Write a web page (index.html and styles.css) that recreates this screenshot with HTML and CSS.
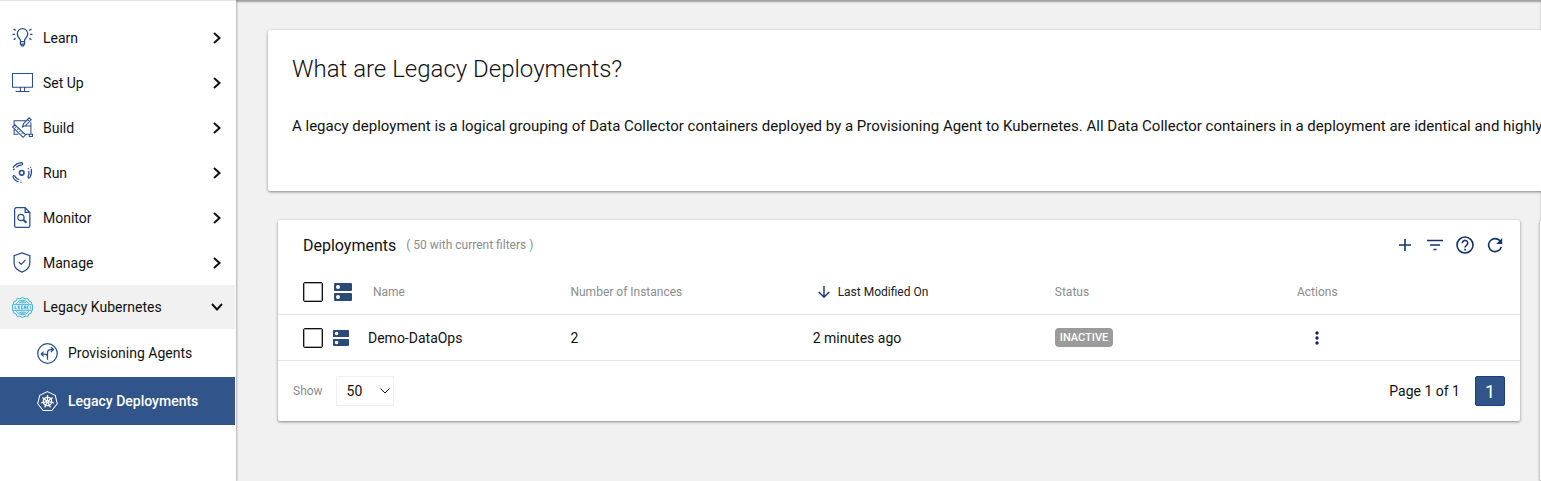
FILE: index.html
```html
<!DOCTYPE html>
<html lang="en">
<head>
  <meta charset="UTF-8" />
  <meta name="viewport" content="width=device-width, initial-scale=1.0"/>
  <title>Legacy Deployments</title>
  <link rel="stylesheet" href="styles.css">
</head>
<body>
  <svg class="sprite" aria-hidden="true">
    <symbol id="chevron" viewBox="0 0 12 14">
      <path d="M3 2l5.500 5L3 12" fill="none" stroke="currentColor" stroke-width="2"/>
    </symbol>
    <symbol id="server" viewBox="0 0 18 18">
      <path fill="currentColor" fill-rule="evenodd" d="M1 0h16a1 1 0 0 1 1 1v6a1 1 0 0 1-1 1H1a1 1 0 0 1-1-1V1a1 1 0 0 1 1-1zM4 2a2 2 0 1 0 0 4 2 2 0 0 0 0-4zM1 10h16a1 1 0 0 1 1 1v6a1 1 0 0 1-1 1H1a1 1 0 0 1-1-1v-6a1 1 0 0 1 1-1zM4 12a2 2 0 1 0 0 4 2 2 0 0 0 0-4z"/>
    </symbol>
  </svg>

  <div class="layout">
    <nav class="sidebar">
      <a class="nav-item" href="#">
        <svg class="nav-icon" viewBox="0 0 20 20">
          <path d="M8 14v-1.800C6.500 10.500 5 8.800 5 6.500a5 5 0 0 1 10 0c0 2.300-1.500 4-3 5.700V14zM8 14v2.200h4V14M8.500 16.500L9 18h2l.5-1.500M.5 7h2.500M17 7h2.500M1.500 2l2 1.200M18.500 2l-2 1.200M1.500 12l2-1.200M18.500 12l-2-1.200"/>
        </svg>
        <span class="nav-label">Learn</span>
        <svg class="chevron"><use href="#chevron"/></svg>
      </a>
      <a class="nav-item" href="#">
        <svg class="nav-icon thin" viewBox="0 0 20 20">
          <path d="M.5 1.500h19v13H.5zM8 14.500v3.500M12 14.500v3.500M3.500 18.500h13"/>
        </svg>
        <span class="nav-label">Set Up</span>
        <svg class="chevron"><use href="#chevron"/></svg>
      </a>
      <a class="nav-item" href="#">
        <svg class="nav-icon thin" viewBox="0 0 20 20">
          <path d="M13 3.500H2v4.500M2 12v4.500h4M18 5v12M13 16.500h3.500M10 8.500h8M16.500 16.500h3v2h-3zM.5 9.500L3 7.500l10 9.500-2.500 2.300zM3 10l1-.8M5 12l1-.8M7 14l1-.8M9 16l1-.8M10 9.500l1-3.200L16.300.8l2 1.900-5.500 5.500zM14.800 2.500l2 2"/>
        </svg>
        <span class="nav-label">Build</span>
        <svg class="chevron"><use href="#chevron"/></svg>
      </a>
      <a class="nav-item" href="#">
        <svg class="nav-icon" viewBox="0 0 20 20">
          <circle cx="9.300" cy="10.300" r="2.200" stroke-width="1.500"/>
          <path d="M.8 5.500A11 11 0 0 1 9 .6c1.500 0 1.500 2 .2 2.200A10 10 0 0 0 4 5M2.500 6.500L1 7.500M.7 13.500c.5 2 2.500 4.500 5.500 5.500M1 13.200c1.200-.8 1.800.3 2.300 1.200.9 1.400 2 2 3.700 2.500M8.500 17.500v.8M8.500 19.300v.7M16 8.500c.4 2 .2 3.500-.6 5-.6 1.500.8 2.400 1.700 1 1.500-2.500 1.800-5 1.200-8M15 6.300h1M17.600 5l.4.700"/>
        </svg>
        <span class="nav-label">Run</span>
        <svg class="chevron"><use href="#chevron"/></svg>
      </a>
      <a class="nav-item" href="#">
        <svg class="nav-icon" viewBox="0 0 20 20">
          <path d="M12.500.7H4a1.500 1.500 0 0 0-1.500 1.500v15.600A1.500 1.500 0 0 0 4 19.300h11.500a1.500 1.500 0 0 0 1.500-1.500V5.200zM12.500.7v4.500H17"/>
          <circle cx="8.500" cy="10" r="3"/>
          <path d="M11 12.300l2.800 2.800" stroke-width="2"/>
        </svg>
        <span class="nav-label">Monitor</span>
        <svg class="chevron"><use href="#chevron"/></svg>
      </a>
      <a class="nav-item" href="#">
        <svg class="nav-icon" viewBox="0 0 20 20">
          <path d="M9.500.8L17 3.500v6.700c0 4-3 7.200-7.500 9-4.500-1.800-7.500-5-7.500-9V3.500zM6.500 9.500l2.300 2.300 4-4.300"/>
        </svg>
        <span class="nav-label">Manage</span>
        <svg class="chevron"><use href="#chevron"/></svg>
      </a>
      <a class="nav-item open" href="#">
        <svg class="nav-icon legacy" viewBox="0 0 20 20">
          <path d="M1.200 7l.5-2.300 2.200-1 1-2.200 2.600.2L10 .5l2.500 1.200 2.600-.2 1 2.200 2.200 1 .5 2.300M1.200 13l.5 2.300 2.200 1 1 2.200 2.600-.2 2.500 1.200 2.500-1.200 2.600.2 1-2.200 2.200-1 .5-2.300"/>
          <path d="M4 6.500a7 7 0 0 1 12 0M4 13.500a7 7 0 0 0 12 0M6.500 5.500h7M6.500 14.500h7M8 4h4M8 16h4"/>
          <path d="M.5 7.300h19v5.400H.5z"/>
          <path d="M3 8.500v2.800h1.400M7.500 8.600H6v2.700h1.500M6 10h1.300M10.500 8.600H9v2.700h1.500V10M12 11.500v-2.900h1.300v2.900M12 10.300h1.300M16 8.600h-1.300v2.700H16M17 8.500l.6 1.200v1.800"/>
        </svg>
        <span class="nav-label">Legacy Kubernetes</span>
        <svg class="chevron down"><use href="#chevron"/></svg>
      </a>
      <a class="nav-item sub" href="#">
        <svg class="nav-icon" viewBox="0 0 20 20">
          <circle cx="10" cy="10" r="9.300"/>
          <path d="M10 16V9.500c0-2 1-3.200 3-3.200h2.500M13.200 4l2.500 2.300-2.500 2.300M10 13c0-1.700-.8-2.500-2.500-2.500H4M6.300 8.200L4 10.500l2.300 2.300"/>
        </svg>
        <span class="nav-label">Provisioning Agents</span>
      </a>
      <a class="nav-item sub active" href="#">
        <svg class="nav-icon" viewBox="0 0 20 20">
          <path d="M10 .6l7.400 3.500 1.900 8-5.200 6.500H5.900L.7 12.100l1.900-8z" stroke-width="1"/>
          <circle cx="10" cy="10" r="4"/>
          <circle cx="10" cy="10" r="1"/>
          <path d="M10 3.800V9M14.900 6.100l-4.100 3.300M16 11.400l-5-1.200M12.700 15.600L10.500 11M7.300 15.600L9.500 11M4 11.400l5-1.200M5.100 6.100l4.100 3.300"/>
        </svg>
        <span class="nav-label">Legacy Deployments</span>
      </a>
    </nav>

    <main class="content">
      <section class="card intro">
        <h1>What are Legacy Deployments?</h1>
        <p>A legacy deployment is a logical grouping of Data Collector containers deployed by a Provisioning Agent to Kubernetes. All Data Collector containers in a deployment are identical and highly available.</p>
      </section>

      <div class="panels">
        <section class="card deployments">
          <header class="panel-header">
            <h2>Deployments</h2>
            <span class="filter-count">( 50 with current filters )</span>
            <div class="toolbar">
              <button class="icon-btn" type="button" aria-label="Add">
                <svg viewBox="0 0 18 18"><path d="M9 3v12M3 9h12"/></svg>
              </button>
              <button class="icon-btn" type="button" aria-label="Filter">
                <svg viewBox="0 0 18 18"><path d="M1 4.500h16M4 9h10M7.500 13.500h3"/></svg>
              </button>
              <button class="icon-btn" type="button" aria-label="Help">
                <svg viewBox="0 0 18 18"><circle cx="9" cy="9" r="8"/><path d="M6.300 7.200a2.700 2.700 0 1 1 4.400 2C9.600 10 9 10.400 9 11.500M9 12.800v1.600"/></svg>
              </button>
              <button class="icon-btn" type="button" aria-label="Refresh">
                <svg viewBox="0 0 18 18"><path d="M15.300 11A6.500 6.500 0 1 1 13.600 4.400L15 5.800"/><path class="solid" d="M16.200 2v6h-6z"/></svg>
              </button>
            </div>
          </header>

          <table class="deploy-table">
            <colgroup>
              <col class="col-check">
              <col class="col-name">
              <col class="col-data">
              <col class="col-data">
              <col class="col-data">
              <col>
            </colgroup>
            <thead>
              <tr>
                <th>
                  <div class="check-cell">
                    <input type="checkbox" aria-label="Select all deployments">
                    <svg class="server large"><use href="#server"/></svg>
                  </div>
                </th>
                <th class="indent">Name</th>
                <th>Number of Instances</th>
                <th class="sorted">
                  <div class="sort-label">
                    <svg viewBox="0 0 12 12"><path d="M6 0v11M.8 6L6 11.200 11.200 6"/></svg>
                    Last Modified On
                  </div>
                </th>
                <th>Status</th>
                <th>Actions</th>
              </tr>
            </thead>
            <tbody>
              <tr>
                <td>
                  <div class="check-cell">
                    <input type="checkbox" aria-label="Select Demo-DataOps">
                    <svg class="server"><use href="#server"/></svg>
                  </div>
                </td>
                <td>Demo-DataOps</td>
                <td>2</td>
                <td>2 minutes ago</td>
                <td><span class="badge">INACTIVE</span></td>
                <td>
                  <button class="more-btn" type="button" aria-label="More actions">
                    <svg viewBox="0 0 4 14"><circle cx="2" cy="2" r="1.700"/><circle cx="2" cy="7" r="1.700"/><circle cx="2" cy="12" r="1.700"/></svg>
                  </button>
                </td>
              </tr>
            </tbody>
          </table>

          <footer class="panel-footer">
            <label for="pageSize">Show</label>
            <div class="select-box">
              <select id="pageSize">
                <option>50</option>
              </select>
              <svg viewBox="0 0 10 6"><path d="M.5.5L5 5 9.500.5"/></svg>
            </div>
            <span class="page-info">Page 1 of 1</span>
            <button class="page-btn" type="button">1</button>
          </footer>
        </section>
        <section class="card side-panel"></section>
      </div>
    </main>
  </div>
</body>
</html>
```
FILE: styles.css
```css
* {
  box-sizing: border-box;
}
body {
  margin: 0;
  font-family: Roboto, "Liberation Sans", sans-serif;
  font-size: 14px;
  color: #111;
  background: #f1f1f1;
}
h1, h2, p {
  margin: 0;
}
button {
  font-family: inherit;
  padding: 0;
  border: none;
  background: none;
  cursor: pointer;
}
.sprite {
  display: none;
}
.layout {
  display: flex;
  min-height: 100vh;
}

/* sidebar */
.sidebar {
  flex: 0 0 236px;
  padding-top: 14px;
  padding-right: 1px;
  background: #fff;
  border-top: 1px solid #e4e4e4;
  box-shadow: 0 0 3px rgba(0, 0, 0, 0.3);
  z-index: 1;
}
.nav-item {
  display: flex;
  align-items: center;
  gap: 10px;
  height: 45px;
  padding: 0 12px;
  color: #111;
  font-size: 14px;
  text-decoration: none;
}
.nav-label {
  flex: 1;
}
.nav-icon {
  width: 21px;
  height: 21px;
  fill: none;
  stroke: #274e91;
  stroke-width: 1.2;
}
.nav-icon.thin {
  stroke-width: 1;
}
.nav-icon.legacy {
  stroke: #35b4dc;
  stroke-width: 0.9;
}
.chevron {
  width: 12px;
  height: 14px;
}
.chevron.down {
  transform: rotate(90deg);
}
.nav-item.open {
  height: 44px;
  background: #f1f1f1;
}
.nav-item.sub {
  height: 48px;
  padding-left: 37px;
}
.nav-item.active {
  background: #31548b;
  color: #fff;
  font-weight: 500;
}
.nav-item.active .nav-icon {
  stroke: #fff;
}

/* content */
.content {
  flex: 1;
  min-width: 0;
  overflow: hidden;
  padding-top: 30px;
  padding-left: 32px;
  box-shadow: inset 0 2px 2px rgba(0, 0, 0, 0.35);
}
.card {
  background: #fff;
  border-radius: 2px;
  box-shadow: 0 1px 3px rgba(0, 0, 0, 0.45);
}
.intro {
  margin-right: -20px;
  padding: 23px 24px 50px;
  white-space: nowrap;
}
.intro h1 {
  font-size: 24px;
  font-weight: 300;
  line-height: 32px;
}
.intro p {
  margin-top: 26px;
  font-size: 15px;
  line-height: 30px;
}
.panels {
  display: flex;
  align-items: flex-start;
  gap: 20px;
  margin-top: 29px;
  padding-left: 10px;
}
.deployments {
  flex: 1;
}
.side-panel {
  flex: 0 0 300px;
  align-self: stretch;
  min-height: 261px;
  margin-right: -299px;
}
.panel-header {
  display: flex;
  align-items: center;
  gap: 10px;
  height: 50px;
  padding: 0 16px 0 25px;
}
.panel-header h2 {
  font-size: 16px;
  font-weight: 400;
}
.filter-count {
  font-size: 12px;
  color: #8c8c8c;
}
.toolbar {
  display: flex;
  gap: 12px;
  margin-left: auto;
}
.icon-btn svg {
  display: block;
  width: 18px;
  height: 18px;
  fill: none;
  stroke: #14336b;
  stroke-width: 1.6;
}
.icon-btn .solid {
  fill: #14336b;
  stroke: none;
}

/* table */
.deploy-table {
  width: 100%;
  table-layout: fixed;
  border-spacing: 0;
}
.col-check {
  width: 90px;
}
.col-name {
  width: 16.3%;
}
.col-data {
  width: 19.5%;
}
.deploy-table th,
.deploy-table td {
  padding: 0;
  text-align: left;
  border-bottom: 1px solid #e6e6e6;
}
.deploy-table th {
  height: 45px;
  font-size: 12px;
  font-weight: 400;
  color: #8c8c8c;
}
.deploy-table td {
  height: 46px;
}
.deploy-table .indent,
.deploy-table .sorted {
  padding-left: 5px;
}
.deploy-table .sorted {
  color: #222;
}
.check-cell {
  display: flex;
  align-items: center;
  gap: 10px;
  padding-left: 25px;
}
input[type="checkbox"] {
  appearance: none;
  width: 20px;
  height: 20px;
  margin: 0;
  background: #fff;
  border: 1px solid #111;
  border-radius: 2px;
  box-shadow: inset 0 0 0 1px #aaa;
}
.server {
  width: 16px;
  height: 16px;
  color: #2c4a78;
}
.server.large {
  width: 18px;
  height: 18px;
  margin-left: 1px;
}
.sort-label {
  display: flex;
  align-items: center;
  gap: 8px;
}
.sort-label svg {
  width: 12px;
  height: 12px;
  fill: none;
  stroke: #14336b;
  stroke-width: 1.4;
}
.badge {
  display: inline-block;
  padding: 0 5px;
  border-radius: 4px;
  background: #9b9b9b;
  color: #fff;
  font-size: 11px;
  font-weight: 500;
  line-height: 19px;
}
.more-btn {
  display: block;
  width: 40px;
}
.more-btn svg {
  display: block;
  width: 4px;
  height: 14px;
  margin: 0 auto;
  fill: #14205c;
}

/* footer */
.panel-footer {
  display: flex;
  align-items: center;
  height: 60px;
  padding: 0 15px;
}
.panel-footer label {
  font-size: 12px;
  color: #8c8c8c;
}
.select-box {
  display: grid;
  align-items: center;
  width: 58px;
  height: 30px;
  margin-left: 13px;
  border: 1px solid #f0f0f0;
}
.select-box select,
.select-box svg {
  grid-area: 1 / 1;
}
.select-box select {
  appearance: none;
  height: 28px;
  padding: 0 0 0 10px;
  border: none;
  background: none;
  font-family: inherit;
  font-size: 14px;
  color: #111;
}
.select-box svg {
  justify-self: end;
  width: 10px;
  height: 6px;
  margin-right: 3px;
  fill: none;
  stroke: #111;
  pointer-events: none;
}
.page-info {
  margin-left: auto;
}
.page-btn {
  width: 30px;
  height: 30px;
  margin-left: 15px;
  border: 1px solid #1d3f80;
  border-radius: 2px;
  background: #31548b;
  color: #fff;
  font-size: 18px;
}
```
